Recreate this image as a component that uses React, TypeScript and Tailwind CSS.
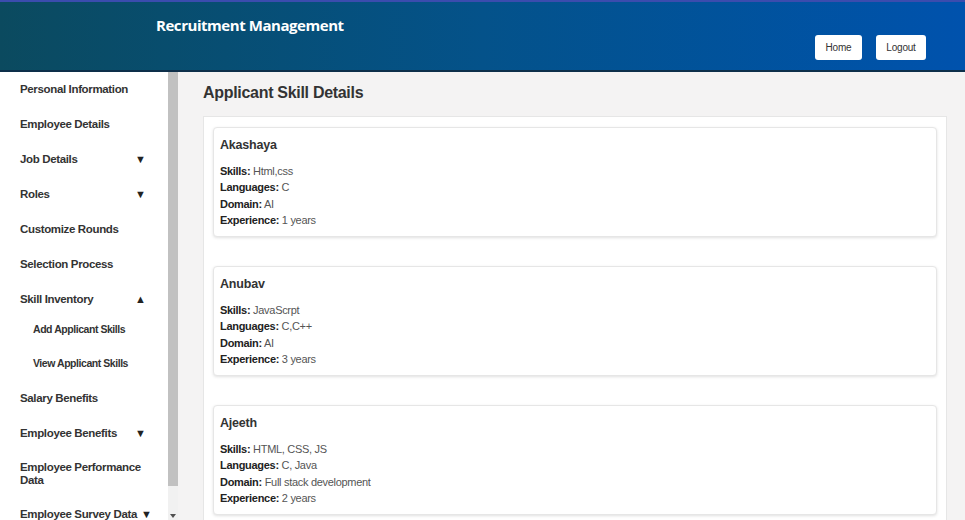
import { useState } from "react";

type Applicant = {
  name: string;
  skills: string;
  languages: string;
  domain: string;
  experience: number;
};

const applicants: Applicant[] = [
  { name: "Akashaya", skills: "Html,css", languages: "C", domain: "AI", experience: 1 },
  { name: "Anubav", skills: "JavaScrpt", languages: "C,C++", domain: "AI", experience: 3 },
  { name: "Ajeeth", skills: "HTML, CSS, JS", languages: "C, Java", domain: "Full stack development", experience: 2 },
];

type NavItem = { label: string; caret?: "down" | "up"; sub?: string[]; nowrap?: boolean };

const nav: NavItem[] = [
  { label: "Personal Information" },
  { label: "Employee Details" },
  { label: "Job Details", caret: "down" },
  { label: "Roles", caret: "down" },
  { label: "Customize Rounds" },
  { label: "Selection Process" },
  { label: "Skill Inventory", caret: "up", sub: ["Add Applicant Skills", "View Applicant Skills"] },
  { label: "Salary Benefits" },
  { label: "Employee Benefits", caret: "down" },
  { label: "Employee Performance Data" },
  { label: "Employee Survey Data", caret: "down", nowrap: true },
];

function Header() {
  return (
    <header className="h-[72px] shrink-0 border-t-2 border-t-[#3b4cae] border-b-2 border-b-[#0d2f4a] bg-gradient-to-r from-[#0b4a5f] via-[#04528a] to-[#0052ad] flex items-start justify-between">
      <h1 className="ml-[156px] mt-[12px] text-white font-bold text-[15px] font-['Open_Sans',sans-serif] tracking-[-0.45px]">
        Recruitment Management
      </h1>
      <div className="mt-[33px] mr-[39px] flex gap-[14px] font-['Liberation_Sans',Arial,sans-serif] text-[10px] tracking-[-0.2px] text-[#333]">
        <button className="h-[25px] w-[47px] rounded-[3px] bg-white">Home</button>
        <button className="h-[25px] w-[50px] rounded-[3px] bg-white">Logout</button>
      </div>
    </header>
  );
}

function Caret({ dir }: { dir: "down" | "up" }) {
  return <span className="text-[11px] text-[#222] tracking-normal">{dir === "down" ? "▼" : "▲"}</span>;
}

function Scrollbar() {
  return (
    <div className="w-[10px] shrink-0 flex flex-col bg-[#f1f1f1]">
      <div className="h-[414px] bg-[#c1c1c1]" />
      <div className="flex-1 flex items-end justify-center pb-[2px]">
        <svg width="6" height="4" viewBox="0 0 6 4">
          <path d="M0 0h6L3 4z" fill="#505050" />
        </svg>
      </div>
    </div>
  );
}

function Sidebar() {
  return (
    <aside className="flex shrink-0 bg-white font-['Liberation_Sans',Arial,sans-serif] text-[#333]">
      <ul className="w-[168px] overflow-hidden pl-[20px] pr-[22px]">
        {nav.map((n) => (
          <li key={n.label}>
            <div className="flex items-center justify-between gap-[4px] min-h-[35px] py-[10px] text-[11.5px] font-bold leading-[13px] tracking-[-0.35px]">
              <span className={n.nowrap ? "whitespace-nowrap" : ""}>{n.label}</span>
              {n.caret && <Caret dir={n.caret} />}
            </div>
            {n.sub && (
              <ul className="-mt-[4px] pl-[13px]">
                {n.sub.map((s) => (
                  <li key={s} className="h-[34px] flex items-center text-[10.5px] font-bold tracking-[-0.45px]">
                    {s}
                  </li>
                ))}
              </ul>
            )}
          </li>
        ))}
      </ul>
      <Scrollbar />
    </aside>
  );
}

function ApplicantCard({ a }: { a: Applicant }) {
  const rows: [string, string][] = [
    ["Skills", a.skills],
    ["Languages", a.languages],
    ["Domain", a.domain],
    ["Experience", `${a.experience} years`],
  ];
  return (
    <div className="h-[110px] shrink-0 rounded-[4px] border border-[#e6e6e6] bg-white px-[6px] pt-[9px] shadow-[0_1px_3px_rgba(0,0,0,0.12)]">
      <h3 className="text-[12.5px] font-bold leading-[16px] tracking-[-0.2px] text-[#333]">{a.name}</h3>
      <div className="mt-[10px] text-[11px] leading-[16.3px] tracking-[-0.3px]">
        {rows.map(([k, v]) => (
          <p key={k}>
            <span className="font-bold text-[#222]">{k}:</span> <span className="text-[#555]">{v}</span>
          </p>
        ))}
      </div>
    </div>
  );
}

export default function App() {
  const [list] = useState(applicants);
  return (
    <div className="h-[520px] w-[965px] overflow-hidden flex flex-col font-['Liberation_Sans',Arial,sans-serif]">
      <Header />
      <div className="flex flex-1 min-h-0">
        <Sidebar />
        <main className="flex-1 min-w-0 bg-[#f4f3f3] pl-[25px] pr-[18px] overflow-hidden">
          <h2 className="mt-[11px] text-[16px] font-bold leading-[20px] tracking-[-0.3px] text-[#333]">Applicant Skill Details</h2>
          <section className="mt-[13px] border border-[#e6e6e6] bg-white px-[9px] pt-[10px] pb-[20px] flex flex-col gap-[29px]">
            {list.map((a) => (
              <ApplicantCard key={a.name} a={a} />
            ))}
          </section>
        </main>
      </div>
    </div>
  );
}
